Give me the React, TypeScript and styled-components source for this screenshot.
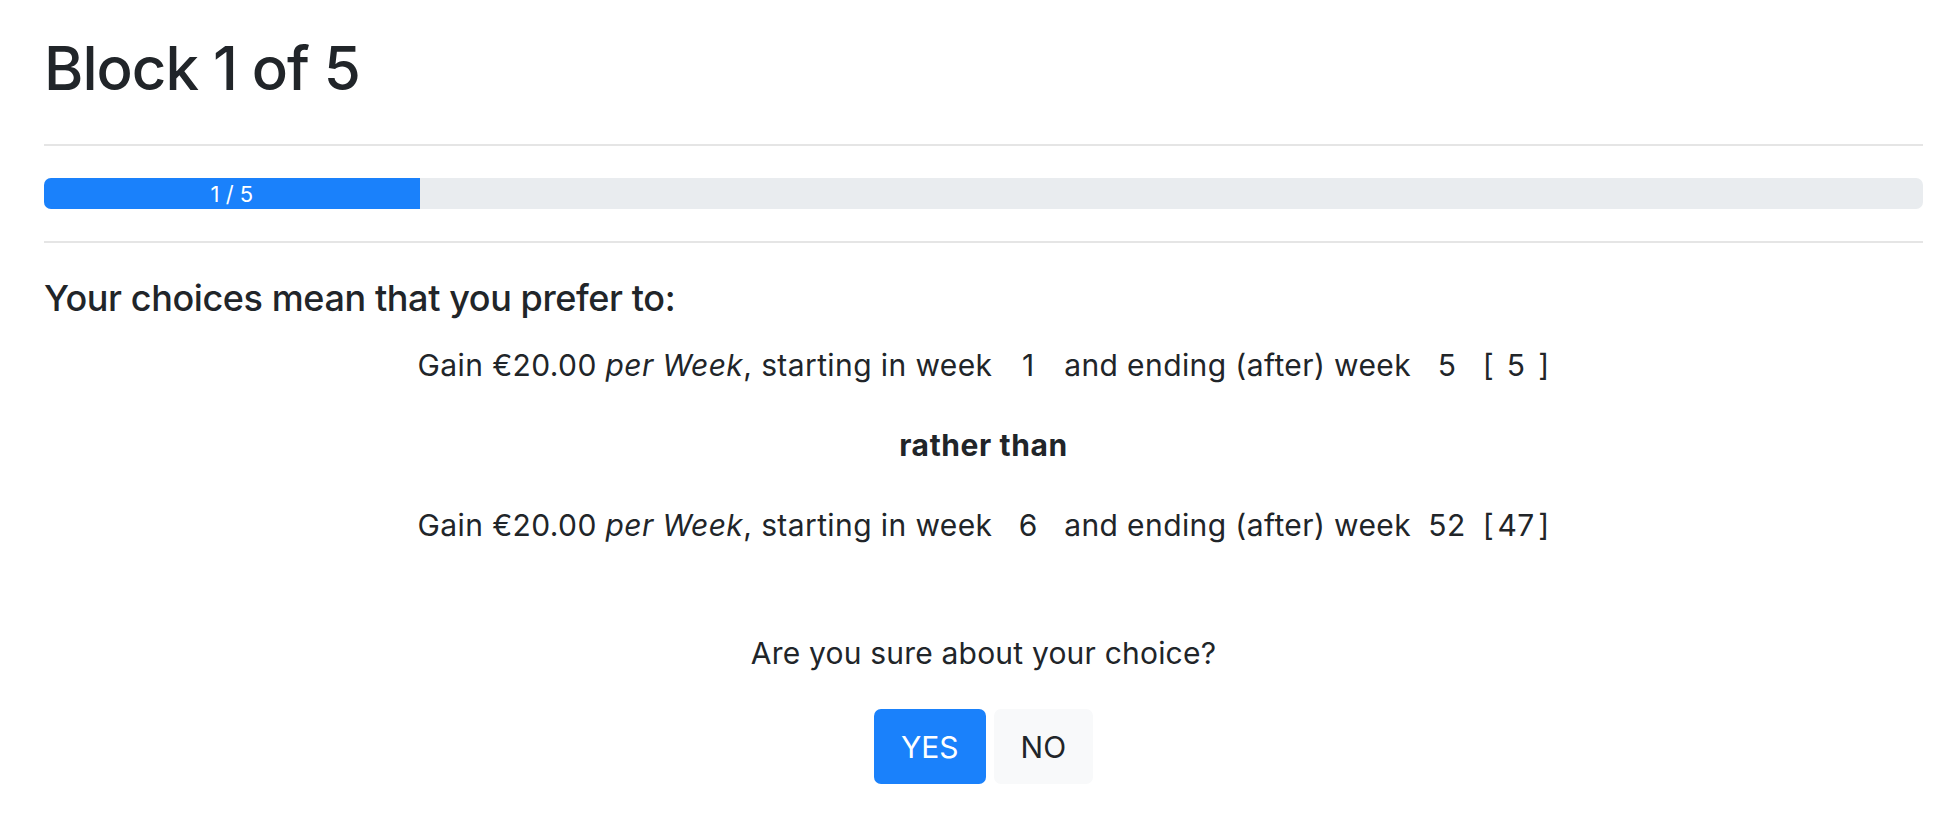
import React from "react";
import styled, { createGlobalStyle } from "styled-components";

const Global = createGlobalStyle`
  html, body { margin: 0; padding: 0; background: #fff; }
  body {
    font-family: Inter, "Noto Sans", "Liberation Sans", sans-serif;
    color: #212529;
  }
`;

const Page = styled.div`
  padding: 32px 17px 40px 44px;
`;

const Title = styled.h1`
  margin: 0;
  font-size: 60px;
  font-weight: 500;
  line-height: 72px;
  letter-spacing: -1px;
`;

const Rule = styled.hr<{ $top: number }>`
  margin: ${(p) => p.$top}px 0 0;
  border: 0;
  border-top: 2px solid #e5e5e5;
  height: 0;
`;

const Track = styled.div`
  margin-top: 32px;
  height: 31px;
  background: #e9ecef;
  border-radius: 7px;
  overflow: hidden;
  display: flex;
`;

const Fill = styled.div`
  background: #1a81fb;
  color: #fff;
  font-size: 22px;
  display: flex;
  align-items: center;
  justify-content: center;
  height: 100%;
`;

const Subtitle = styled.h4`
  margin: 34px 0 0;
  font-size: 36px;
  font-weight: 500;
  line-height: 43px;
  letter-spacing: -0.4px;
`;

const Choices = styled.div`
  margin-top: 23px;
  display: flex;
  flex-direction: column;
  align-items: center;
  gap: 35px;
`;

const Line = styled.div<{ $bold?: boolean }>`
  font-size: 30px;
  line-height: 45px;
  font-weight: ${(p) => (p.$bold ? 700 : 400)};
  letter-spacing: ${(p) => (p.$bold ? 0.6 : 0.4)}px;
  text-align: center;
  white-space: pre;
`;

const Num = styled.span<{ $w: number }>`
  display: inline-block;
  width: ${(p) => p.$w}px;
  text-align: center;
`;

const Question = styled.div`
  margin-top: 83px;
  font-size: 30px;
  line-height: 45px;
  letter-spacing: 0.2px;
  text-align: center;
`;

const Buttons = styled.div`
  margin-top: 33px;
  display: flex;
  justify-content: center;
  gap: 8px;
`;

const Btn = styled.button<{ $primary?: boolean }>`
  height: 75px;
  padding: 0 27px;
  border: 0;
  border-radius: 7px;
  font-family: inherit;
  font-size: 30px;
  background: ${(p) => (p.$primary ? "#1a81fb" : "#f8f9fa")};
  color: ${(p) => (p.$primary ? "#fff" : "#212529")};
  cursor: pointer;
`;

type Option = { start: number; end: number; len: number };

const GainLine: React.FC<{ o: Option }> = ({ o }) => (
  <Line>
    Gain €20.00 <i>per Week</i>, starting in week <Num $w={54}>{o.start}</Num> and
    ending (after) week <Num $w={54}>{o.end}</Num> [<Num $w={44}>{o.len}</Num>]
  </Line>
);

export default function App() {
  const progress = 20;
  return (
    <Page>
      <Global />
      <Title>Block 1 of 5</Title>
      <Rule $top={40} />
      <Track>
        <Fill style={{ width: `${progress}%` }}>1 / 5</Fill>
      </Track>
      <Rule $top={32} />
      <Subtitle>Your choices mean that you prefer to:</Subtitle>
      <Choices>
        <GainLine o={{ start: 1, end: 5, len: 5 }} />
        <Line $bold>rather than</Line>
        <GainLine o={{ start: 6, end: 52, len: 47 }} />
      </Choices>
      <Question>Are you sure about your choice?</Question>
      <Buttons>
        <Btn $primary>YES</Btn>
        <Btn>NO</Btn>
      </Buttons>
    </Page>
  );
}
